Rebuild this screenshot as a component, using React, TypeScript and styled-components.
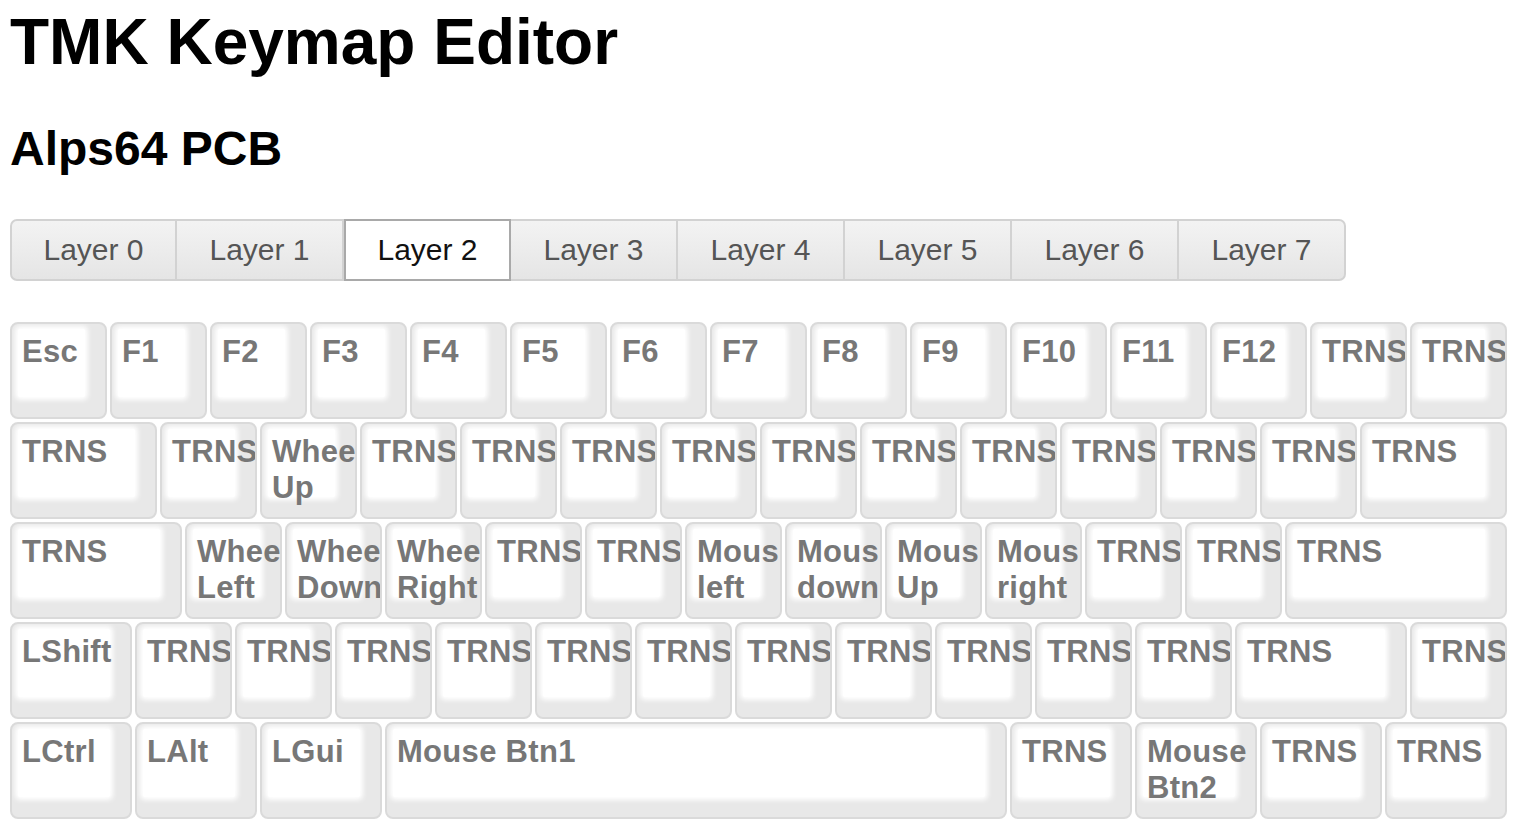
import React from "react";
import styled, { createGlobalStyle } from "styled-components";

const Global = createGlobalStyle`
  html, body { margin: 0; padding: 0; background: #fff; }
  body { font-family: "Liberation Sans", Arial, Helvetica, sans-serif; }
`;

const Page = styled.div`
  padding: 5px 10px 0 10px;
`;

const Title = styled.h1`
  margin: 0;
  font-size: 64px;
  line-height: 74px;
  font-weight: bold;
  color: #000;
`;

const Subtitle = styled.h2`
  margin: 42px 0 0 0;
  font-size: 48px;
  line-height: 55px;
  font-weight: bold;
  color: #000;
`;

const Tabs = styled.div`
  display: flex;
  width: 1335px;
  margin-top: 43px;
`;

const Tab = styled.div<{ $active?: boolean; $first?: boolean; $last?: boolean }>`
  box-sizing: border-box;
  flex: 0 0 167px;
  height: 62px;
  display: flex;
  align-items: center;
  justify-content: center;
  font-size: 30px;
  color: ${(p) => (p.$active ? "#111" : "#555")};
  background: ${(p) => (p.$active ? "#fff" : "linear-gradient(#f3f3f3, #e5e5e5)")};
  border: 2px solid ${(p) => (p.$active ? "#a9a9a9" : "#d2d2d2")};
  border-left-width: ${(p) => (p.$first || p.$active ? "2px" : "0")};
  border-radius: ${(p) => (p.$first ? "7px 0 0 7px" : p.$last ? "0 7px 7px 0" : "0")};
`;

const Keyboard = styled.div`
  margin-top: 41px;
  display: flex;
  flex-direction: column;
  gap: 3px;
`;

const Row = styled.div`
  display: flex;
  gap: 3px;
`;

const Key = styled.div<{ $u: number }>`
  box-sizing: border-box;
  flex: 0 0 ${(p) => p.$u * 100 - 3}px;
  height: 97px;
  border: 2px solid #dadada;
  border-radius: 8px;
  background: #e8e8e8;
  padding: 5px 20px 20px 6px;
  display: flex;
  overflow: hidden;
`;

const Face = styled.div`
  flex: 1;
  background: #fff;
  box-shadow: 0 0 5px 3px #fff;
  border-radius: 2px;
  padding: 5px 0 0 4px;
  min-width: 0;
`;

const Label = styled.div`
  font-size: 31px;
  line-height: 36px;
  letter-spacing: 0.3px;
  font-weight: bold;
  color: #777;
  word-break: normal;
  overflow-wrap: normal;
`;

type K = [string, number];

const rows: K[][] = [
  [
    ["Esc", 1], ["F1", 1], ["F2", 1], ["F3", 1], ["F4", 1], ["F5", 1], ["F6", 1],
    ["F7", 1], ["F8", 1], ["F9", 1], ["F10", 1], ["F11", 1], ["F12", 1],
    ["TRNS", 1], ["TRNS", 1],
  ],
  [
    ["TRNS", 1.5], ["TRNS", 1], ["Wheel Up", 1],
    ["TRNS", 1], ["TRNS", 1], ["TRNS", 1], ["TRNS", 1], ["TRNS", 1],
    ["TRNS", 1], ["TRNS", 1], ["TRNS", 1], ["TRNS", 1], ["TRNS", 1],
    ["TRNS", 1.5],
  ],
  [
    ["TRNS", 1.75], ["Wheel Left", 1], ["Wheel Down", 1], ["Wheel Right", 1],
    ["TRNS", 1], ["TRNS", 1], ["Mouse left", 1], ["Mouse down", 1],
    ["Mouse Up", 1], ["Mouse right", 1], ["TRNS", 1], ["TRNS", 1],
    ["TRNS", 2.25],
  ],
  [
    ["LShift", 1.25],
    ["TRNS", 1], ["TRNS", 1], ["TRNS", 1], ["TRNS", 1], ["TRNS", 1], ["TRNS", 1],
    ["TRNS", 1], ["TRNS", 1], ["TRNS", 1], ["TRNS", 1], ["TRNS", 1],
    ["TRNS", 1.75], ["TRNS", 1],
  ],
  [
    ["LCtrl", 1.25], ["LAlt", 1.25], ["LGui", 1.25], ["Mouse Btn1", 6.25],
    ["TRNS", 1.25], ["Mouse Btn2", 1.25], ["TRNS", 1.25], ["TRNS", 1.25],
  ],
];

const layers = ["Layer 0", "Layer 1", "Layer 2", "Layer 3", "Layer 4", "Layer 5", "Layer 6", "Layer 7"];

export default function App() {
  return (
    <Page>
      <Global />
      <Title>TMK Keymap Editor</Title>
      <Subtitle>Alps64 PCB</Subtitle>
      <Tabs>
        {layers.map((l, i) => (
          <Tab key={l} $active={i === 2} $first={i === 0} $last={i === layers.length - 1}>
            {l}
          </Tab>
        ))}
      </Tabs>
      <Keyboard>
        {rows.map((row, ri) => (
          <Row key={ri}>
            {row.map(([label, u], ki) => (
              <Key key={ki} $u={u}>
                <Face>
                  <Label>{label}</Label>
                </Face>
              </Key>
            ))}
          </Row>
        ))}
      </Keyboard>
    </Page>
  );
}
